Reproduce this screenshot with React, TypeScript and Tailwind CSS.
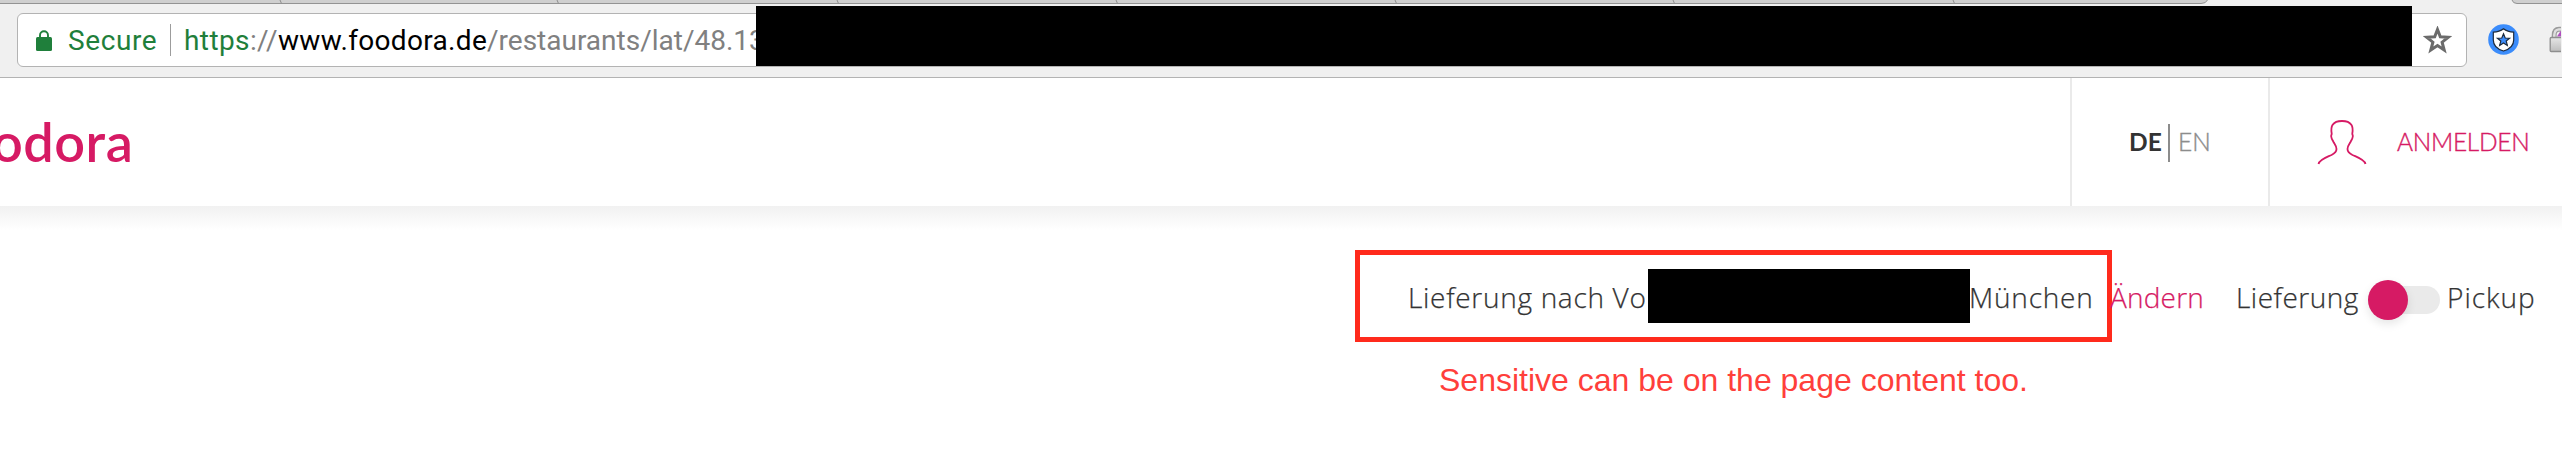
import { useId } from 'react';

const TAB_EDGES = [281, 558, 838, 1117, 1396, 1674, 1954];

function TabStrip() {
  return (
    <svg className="block h-1 w-full shrink-0" viewBox="0 0 2562 4" preserveAspectRatio="none">
      <path d="M0 0H2207.500Q2206 3.500 2201 3.500H0Z" fill="#cfcfcf" />
      <path d="M0 3.500H2201Q2206 3.500 2207.500 0" fill="none" stroke="#939393" />
      <path d="M2512 0Q2513 3.500 2517 3.500H2562V0Z" fill="#cfcfcf" />
      <path d="M2512 0Q2513 3.500 2517 3.500H2562" fill="none" stroke="#939393" />
      {TAB_EDGES.map((x) => (
        <path key={x} d={`M${x - 1} 0L${x + 0.5} 3.5`} stroke="#8f8f8f" />
      ))}
    </svg>
  );
}

function SecureLock() {
  return (
    <svg className="h-[21px] w-4 shrink-0" viewBox="0 0 16 21">
      <path d="M4 8V5.200a4 4 0 0 1 8 0V8" fill="none" stroke="#1f7f3b" strokeWidth="1.9" />
      <rect x="0" y="7" width="16" height="14" rx="1.500" fill="#1f7f3b" />
    </svg>
  );
}

function BookmarkStar() {
  return (
    <svg className="h-7 w-[29px] shrink-0" viewBox="0 0 29 28">
      <path
        d="M14.500 3.500L17.300 10.800L25.300 11.200L19.100 16.200L21.200 24L14.500 19.600L7.800 24L9.900 16.200L3.700 11.200L11.700 10.800Z"
        fill="#fff"
        stroke="#6b6b6b"
        strokeWidth="3"
      />
    </svg>
  );
}

function ShieldBadge() {
  return (
    <svg className="h-[31px] w-[31px] shrink-0" viewBox="0 0 31 31">
      <circle cx="15.500" cy="15.500" r="15.300" fill="#3b8cfb" />
      <path
        d="M15.500 4.800Q19.500 8 25.700 8.200V16Q25.700 24 15.500 27Q5.300 24 5.300 16V8.200Q11.500 8 15.500 4.800Z"
        fill="#fff"
        stroke="#1c2a3c"
        strokeWidth="1.200"
      />
      <path
        d="M15.500 9.800L17.200 14L21.600 14.200L18.200 17L19.300 21.400L15.500 19L11.700 21.400L12.800 17L9.400 14.200L13.800 14Z"
        fill="#3b8cfb"
        stroke="#1c2a3c"
        strokeWidth="1.200"
      />
    </svg>
  );
}

function PadlockExtension() {
  const id = useId();
  return (
    <svg className="h-[27px] w-3 shrink-0" viewBox="0 0 12 27">
      <defs>
        <linearGradient id={id} x1="0" x2="0" y1="0" y2="1">
          <stop offset="0" stopColor="#e6e6e6" />
          <stop offset="1" stopColor="#bdbdbd" />
        </linearGradient>
      </defs>
      <path d="M3.500 12V9.500Q3.500 1.600 10 1.600H14" fill="none" stroke="#9b9b9b" strokeWidth="1.600" />
      <path d="M5.200 12V9.500Q5.200 3.400 10 3.400H14" fill="none" stroke="#dedede" strokeWidth="1.600" />
      <path d="M7 12V9.500Q7 5.200 10 5.200H14" fill="none" stroke="#9b9b9b" strokeWidth="1.200" />
      <path d="M12 4.500L8 10.500H12Z" fill="#b04fc0" />
      <rect x="1.200" y="11.500" width="16" height="14" rx="1" fill={`url(#${id})`} stroke="#8e8e8e" strokeWidth="1.300" />
    </svg>
  );
}

function PersonOutline() {
  return (
    <svg className="h-[46px] w-[50px] shrink-0" viewBox="0 0 50 46">
      <path
        d="M1.500 45C2.500 40.500 9 38.500 14.500 36C18.500 34 19.500 32 19.500 30C19.500 27 18 25.500 16.500 23C15.500 21 14.500 20 14.200 17.500C14 16 14.800 16 14.700 14.500C13.500 8 15 2 25 2C35 2 36.500 8 35.300 14.500C35.200 16 36 16 35.800 17.500C35.500 20 34.500 21 33.500 23C32 25.500 30.500 27 30.500 30C30.500 32 31.500 34 35.500 36C41 38.500 47.500 40.500 48.500 45"
        fill="none"
        stroke="#d61a64"
        strokeWidth="1.800"
      />
    </svg>
  );
}

function BrowserBar() {
  return (
    <div className="flex h-[78px] flex-col border-b border-[#b3b3b3] bg-[#f0f0f0]">
      <TabStrip />
      <div className="flex h-[73px] items-start">
        <div className="mt-[9px] ml-[17px] flex h-[54px] w-[2450px] shrink-0 items-center rounded-md border border-[#b3b3b3] bg-white font-['Roboto',sans-serif] text-[28px] leading-[54px]">
          <div className="ml-[18px] flex items-center">
            <SecureLock />
            <span className="mt-[2px] ml-4 w-[92px] whitespace-nowrap tracking-[0.6px] text-[#1f7f3b]">Secure</span>
          </div>
          <div className="ml-[10px] h-8 w-px bg-[#9c9c9c]" />
          <div className="mt-[2px] ml-[13px] flex w-[572px] overflow-hidden whitespace-nowrap">
            <span className="w-[94px] shrink-0 tracking-[0.4px] text-[#808080]">
              <span className="text-[#1f7f3b]">https</span>://
            </span>
            <span className="w-[209px] shrink-0 tracking-[0.33px] text-black">www.foodora.de</span>
            <span className="shrink-0 text-[#808080]">/restaurants/lat/48.13</span>
          </div>
          <div className="-mt-[9px] h-[60px] w-[1656px] shrink-0 bg-black" />
          <div className="ml-[11px]">
            <BookmarkStar />
          </div>
        </div>
        <div className="mt-5 ml-[21px]">
          <ShieldBadge />
        </div>
        <div className="mt-[22px] ml-[30px]">
          <PadlockExtension />
        </div>
      </div>
    </div>
  );
}

function SiteHeader() {
  return (
    <header className="flex h-32 items-stretch justify-between bg-white font-['Lato',sans-serif]">
      <div className="flex items-center overflow-hidden">
        <span className="-ml-[8px] text-[54px] leading-[58px] font-semibold tracking-[0.5px] text-[#d61a64]">odora</span>
      </div>
      <div className="flex text-[24.5px]">
        <div className="flex w-[198px] items-center border-l-2 border-[#eaeaea] pl-[57px]">
          <span className="w-[39px] font-bold text-[#333]">DE</span>
          <span className="mt-[2px] h-[38px] w-[2px] bg-[#8c8c8c]" />
          <span className="ml-[8px] font-light text-[#8c8c8c] [-webkit-text-stroke:0.4px_#8c8c8c]">EN</span>
        </div>
        <div className="flex w-[294px] items-center border-l-2 border-[#eaeaea] pl-[47px] text-[#d61a64]">
          <PersonOutline />
          <span className="ml-[30px] font-light tracking-[-0.3px] [-webkit-text-stroke:0.4px_#d61a64]">ANMELDEN</span>
        </div>
      </div>
    </header>
  );
}

function DeliveryRow() {
  return (
    <div className="flex items-center font-['Open_Sans',sans-serif] text-[28px] leading-[40px] font-light whitespace-nowrap text-[#333] [-webkit-text-stroke:0.25px_currentColor]">
      <div className="ml-[1355px] flex h-[92px] w-[757px] shrink-0 items-center border-[5px] border-[#ff2a1c]">
        <span className="mt-[2px] ml-[48px] w-[240px] tracking-[0.7px]">Lieferung nach Vo</span>
        <span className="h-[54px] w-[322px] bg-black" />
        <span className="mt-[2px] -ml-[1px] tracking-[0.8px]">München</span>
      </div>
      <span className="mt-[2px] -ml-[2px] w-[126px] tracking-[0.2px] text-[#d61a64]">Ändern</span>
      <span className="mt-[2px] w-[132px] tracking-[0.5px]">Lieferung</span>
      <span className="mt-2 flex h-7 w-[72px] items-center rounded-full bg-[#eaeaea]">
        <span className="h-10 w-10 rounded-full bg-[#d61a64] shadow-[0_4px_10px_rgba(0,0,0,0.1)]" />
      </span>
      <span className="mt-[2px] ml-[7px] tracking-[1px]">Pickup</span>
    </div>
  );
}

export default function App() {
  return (
    <div className="h-[474px] w-[2562px] overflow-hidden bg-white">
      <BrowserBar />
      <SiteHeader />
      <main className="flex h-[268px] flex-col bg-linear-to-b from-[#f1f1f1] from-0% to-white to-[9%] pt-[44px]">
        <DeliveryRow />
        <p className="mt-[20px] ml-[1439px] font-['Liberation_Sans',sans-serif] text-[32px] leading-9 text-[#ff3f3b]">
          Sensitive can be on the page content too.
        </p>
      </main>
    </div>
  );
}
